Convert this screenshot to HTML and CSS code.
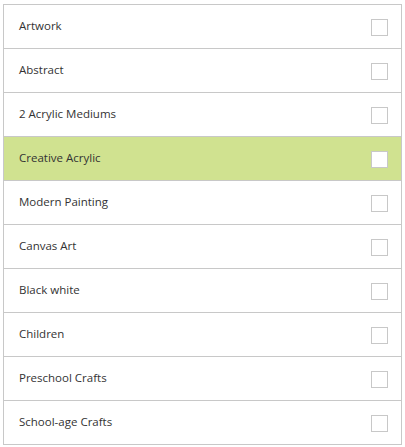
FILE: index.html
```html
<!DOCTYPE html>
<html>
<head>
<meta charset="utf-8">
<link rel="stylesheet" href="styles.css">
</head>
<body>
<ul class="list">
  <li class="item"><span class="label">Artwork</span><span class="check"></span></li>
  <li class="item"><span class="label">Abstract</span><span class="check"></span></li>
  <li class="item"><span class="label">2 Acrylic Mediums</span><span class="check"></span></li>
  <li class="item selected"><span class="label">Creative Acrylic</span><span class="check"></span></li>
  <li class="item"><span class="label">Modern Painting</span><span class="check"></span></li>
  <li class="item"><span class="label">Canvas Art</span><span class="check"></span></li>
  <li class="item"><span class="label">Black white</span><span class="check"></span></li>
  <li class="item"><span class="label">Children</span><span class="check"></span></li>
  <li class="item"><span class="label">Preschool Crafts</span><span class="check"></span></li>
  <li class="item"><span class="label">School-age Crafts</span><span class="check"></span></li>
</ul>
</body>
</html>
```
FILE: styles.css
```css
html, body {
  margin: 0;
  padding: 0;
  background: #ffffff;
}
body {
  padding: 4px 0 0 3px;
  font-family: "Open Sans", "Noto Sans", sans-serif;
}
.list {
  list-style: none;
  margin: 0;
  padding: 0;
  width: 399px;
  box-sizing: border-box;
  border: 1px solid #c8c8c8;
}
.item {
  height: 43px;
  display: flex;
  align-items: center;
  justify-content: space-between;
  padding: 0 13px 0 15px;
  box-sizing: border-box;
  font-size: 11.5px;
  color: #333333;
}
.item + .item {
  border-top: 1px solid #c8c8c8;
  height: 44px;
}
.label {
  margin-bottom: 3px;
}
.item.selected {
  background: #d0e290;
}
.check {
  margin-top: 2px;
  width: 17px;
  height: 17px;
  box-sizing: border-box;
  border: 1px solid #c8c8c8;
  background: #ffffff;
}
```
